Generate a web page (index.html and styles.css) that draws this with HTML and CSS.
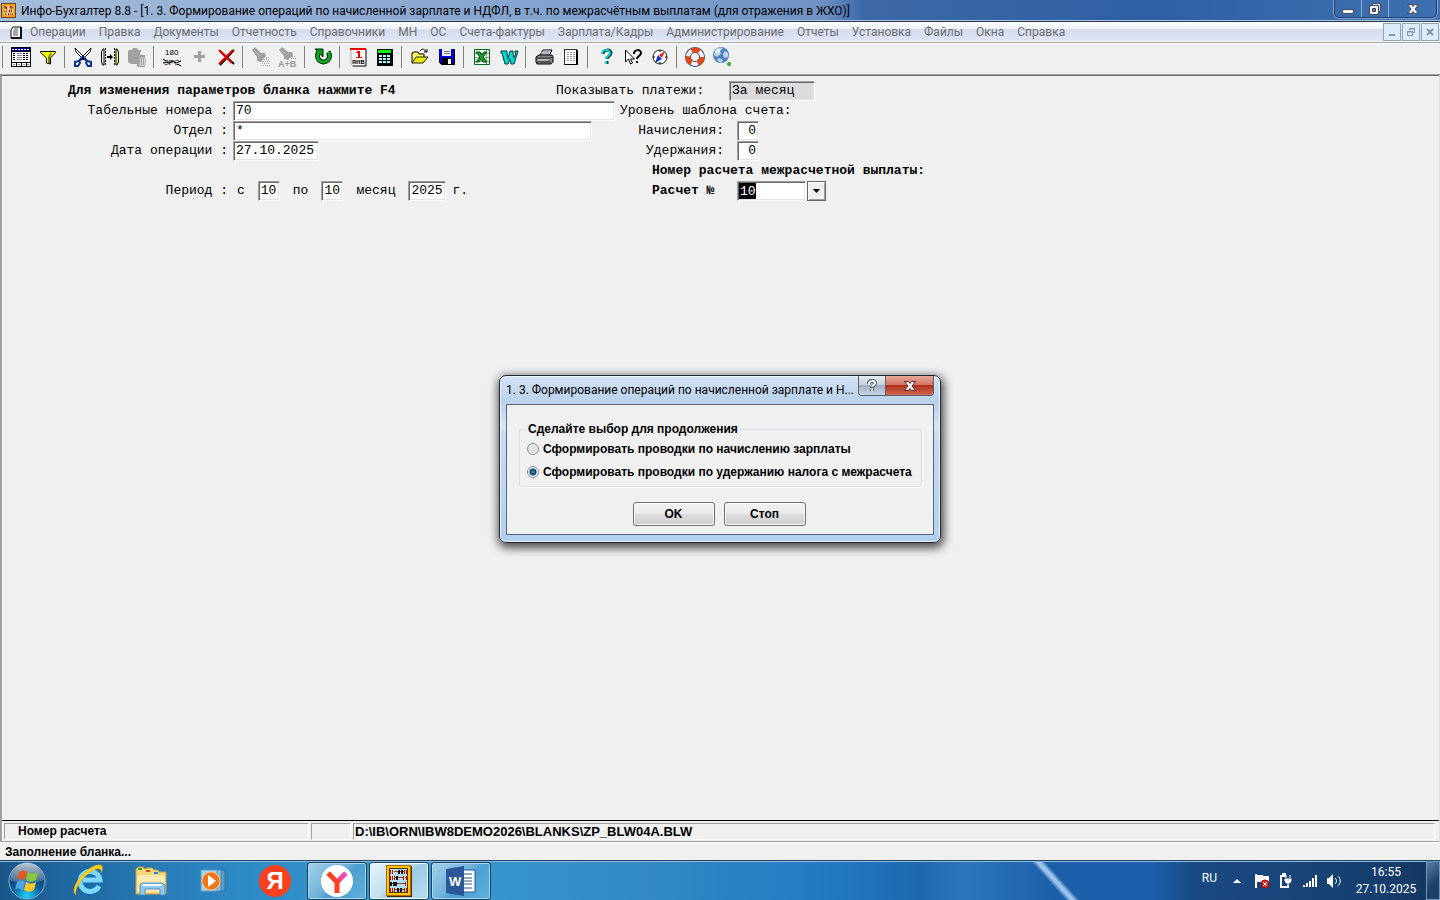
FILE: index.html
```html
<!DOCTYPE html>
<html lang="ru">
<head>
    <meta charset="UTF-8">
    <meta name="viewport" content="width=device-width, initial-scale=1.0">
    <title>Инфо-Бухгалтер 8.8</title>
    <link rel="stylesheet" href="styles.css">
</head>
<body>
    <!-- abacus logo of the taskbar button -->
    <svg class="sprite" aria-hidden="true">
        <symbol id="abacus" viewBox="0 0 26 32">
            <path d="M1 1h25v31H1z" fill="#4a2c00"/>
            <path d="M0 0h25v31H0z" fill="#b86400"/>
            <path d="M1 1h23v29H1z" fill="#ffc800"/>
            <path d="M3 3h19v25H3z" fill="#5a3000"/>
            <path d="M4 4h17v23H4z" fill="#b4dcf0"/>
            <path d="M4 6.500h17M4 12.500h17M4 18.500h17M4 24.500h17" stroke="#805030"/>
            <path d="M4.500 5v4M6.500 5v4M18.500 5v4M20.500 5v4M4.500 11v4M6.500 11v4M8.500 11v4M17.500 11v4M20.500 11v4M19.500 17v4M4.500 23v4M6.500 23v4M8.500 23v4M18.500 23v4M20.500 23v4" stroke="#b01010"/>
            <path d="M5.500 5v4M7.500 5v4M19.500 5v4M5.500 11v4M7.500 11v4M18.500 11v4M20.500 17v4M5.500 23v4M7.500 23v4M19.500 23v4" stroke="#ffe8b0"/>
            <path d="M13 5v4M16 5v4M11 11v4M5 17v4M8 17v4M10 17v4M12 23v4M15 23v4" stroke="#111" stroke-width="2"/>
        </symbol>
    </svg>

    <header class="titlebar">
        <svg class="app-icon" viewBox="0 0 16 16">
            <path d="M0 0h16v16H0z" fill="#6b3b00"/><path d="M1 1h14v14H1z" fill="#f0a020"/><path d="M3 3h10v10H3z" fill="#f8d890"/>
            <path d="M4 3v3M6 4v3M10 3v3M12 4v2M4 8v2M9 7v3M11 7v3M5 11v2M8 11v2M12 11v2" stroke="#5a1000"/>
            <path d="M5 3v3M11 3v3M6 8v2M10 11v2" stroke="#d02000"/>
        </svg>
        <h1 class="title">Инфо-Бухгалтер 8.8 - [1. 3. Формирование операций по начисленной зарплате и НДФЛ, в т.ч. по межрасчётным выплатам (для отражения в ЖХО)]</h1>
        <div class="window-buttons">
            <button type="button" aria-label="Свернуть"><svg width="14" height="14" viewBox="0 0 14 14"><path d="M1.500 7.500h11v4h-11z" fill="#f4f4f4" stroke="#454a5c"/></svg></button>
            <button type="button" aria-label="Развернуть"><svg width="14" height="14" viewBox="0 0 14 14"><path d="M4.500 1.500h8v8h-8z" fill="#ddd" stroke="#454a5c"/><path d="M1.500 3.500h9v9h-9z" fill="#f4f4f4" stroke="#454a5c"/><path d="M4.500 6.500h3v3h-3z" fill="#4878b8" stroke="#454a5c"/></svg></button>
            <button type="button" class="wide" aria-label="Закрыть"><svg width="14" height="14" viewBox="0 0 14 14"><path d="M1.500 2.500h4l1.500 2 1.500-2h4l-3.500 4.500 3.500 4.500h-4L7 9.500l-1.500 2h-4L5 7z" fill="#f4f4f4" stroke="#454a5c"/></svg></button>
        </div>
    </header>

    <nav class="menubar">
        <svg class="doc-icon" viewBox="0 0 12 13"><path d="M3 1h8v11H1V4z" fill="#fff" stroke="#111"/><path d="M11 1v11H1" fill="none" stroke="#111" stroke-width="2"/><path d="M3 5h5M3 7h5M3 9h5M4 3h4" stroke="#555"/></svg>
        <a href="#">Операции</a>
        <a href="#">Правка</a>
        <a href="#">Документы</a>
        <a href="#">Отчетность</a>
        <a href="#">Справочники</a>
        <a href="#">МН</a>
        <a href="#">ОС</a>
        <a href="#">Счета-фактуры</a>
        <a href="#">Зарплата/Кадры</a>
        <a href="#">Администрирование</a>
        <a href="#">Отчеты</a>
        <a href="#">Установка</a>
        <a href="#">Файлы</a>
        <a href="#">Окна</a>
        <a href="#">Справка</a>
        <div class="mdi-buttons">
            <button type="button" aria-label="Свернуть окно"><svg width="10" height="10" viewBox="0 0 10 10"><path d="M2 8h6" stroke="#8295a5" stroke-width="2"/></svg></button>
            <button type="button" aria-label="Восстановить окно"><svg width="10" height="10" viewBox="0 0 10 10"><path d="M3.500 3V1.500h5v4H7M3 2h6M1 5h6" fill="none" stroke="#8295a5"/><path d="M1.500 4.500h5v4h-5z" fill="none" stroke="#8295a5"/></svg></button>
            <button type="button" aria-label="Закрыть окно"><svg width="10" height="10" viewBox="0 0 10 10"><path d="M2 2l6 6M8 2L2 8" stroke="#8295a5" stroke-width="2"/></svg></button>
        </div>
    </nav>

    <div class="toolbar" role="toolbar">
        <span class="sep"></span>
        <button type="button" aria-label="Таблица"><svg viewBox="0 0 24 24" shape-rendering="crispEdges"><path d="M2 2h20v20H2z" fill="#000"/><path d="M3 3h18v3H3z" fill="#008"/><path d="M3 7h18v10H3zM3 18h4v3H3zM8 18h4v3H8zM13 18h4v3h-4zM18 18h3v3h-3z" fill="#fff"/><path d="M3 4.500h18" stroke="#fff" stroke-dasharray="2 1"/><path d="M4 8.500h3M4 10.500h3M4 12.500h3M4 14.500h3M14 8.500h6M14 10.500h6M14 12.500h6M14 14.500h6" stroke="#000" stroke-dasharray="2 1"/><path d="M8 8.500h5M8 10.500h5M8 12.500h5M8 14.500h5M4 19.500h2M9 19.500h2M14 19.500h2M18 19.500h2" stroke="#88a"/></svg></button>
        <button type="button" aria-label="Фильтр"><svg viewBox="0 0 24 24"><path d="M4.500 6.500h15v1L14.500 13v6l-4-1v-5L4.500 7.500z" fill="#ff0" stroke="#000"/><path d="M15 8l-2 4v6" fill="none" stroke="#808000" stroke-width="2"/></svg></button>
        <span class="sep"></span>
        <button type="button" aria-label="Вырезать"><svg viewBox="0 0 24 24"><path d="M4 3l1 4 8 8 2-1zM20 3l-1 4-8 8-2-1z" fill="#fff" stroke="#111"/><path d="M12 11.500l4 4.500M12 11.500L8 16" stroke="#002080" stroke-width="2"/><path d="M4 17l4-1 1 2-2 3H4zM20 17l-4-1-1 2 2 3h3z" fill="#fff" stroke="#103090" stroke-width="2"/></svg></button>
        <button type="button" aria-label="Перенос"><svg viewBox="0 0 24 24"><path d="M6 4H5L3.500 7v10L5 20h1V4z" fill="#fff" stroke="#000"/><path d="M7.500 3v18" stroke="#000" stroke-dasharray="2 1"/><path d="M18 4h1l1.500 3v10L19 20h-1z" fill="#ff6" stroke="#000"/><path d="M16.500 3v18" stroke="#000" stroke-dasharray="2 1"/><path d="M9 12h4" stroke="#000" stroke-width="2"/><path d="M12 9l3 3-3 3z"/></svg></button>
        <button type="button" aria-label="Вставить" disabled><svg viewBox="0 0 24 24"><path d="M4 5h3l1-2h4l1 2h3v5h4v12h-8v-3H6l-3-2V6z" fill="#a0a0a0"/><path d="M14 12h7v9h-7z" fill="#ccc"/><path d="M14 13h6M14 15h6M14 17h6M14 19h6" stroke="#888" stroke-dasharray="1 1"/><path d="M16 7v3" stroke="#fff"/></svg></button>
        <span class="sep"></span>
        <button type="button" aria-label="Замена"><svg viewBox="0 0 24 24"><text x="5" y="10" font-size="8">180</text><text x="4" y="20" font-size="8">ЗРС</text><path d="M3 18l4-1 2 1 4-2 3 2 5-2M3 14l3 2M21 21l-4-2" fill="none" stroke="#000"/></svg></button>
        <button type="button" aria-label="Добавить" disabled><svg viewBox="0 0 24 24"><path d="M12.500 6v11M7 11.500h11" stroke="#a0a0a0" stroke-width="3"/></svg></button>
        <button type="button" aria-label="Удалить"><svg viewBox="0 0 24 24"><path d="M6 6l14 13M20 5L6 20" stroke="#000" stroke-width="2"/><path d="M5 5l13 13M19 5L5 19" stroke="#e80000" stroke-width="2"/></svg></button>
        <span class="sep"></span>
        <button type="button" aria-label="Поиск" disabled><svg viewBox="0 0 24 24"><path d="M3 5l3-3 6 6h4l1 3-5 6-4-1V12z" fill="#a0a0a0"/><path d="M5 5l6 6" stroke="#eee" stroke-dasharray="1 1"/><path d="M15 12.500h5M13 14.500h8M12 16.500h9M13 18.500h8M14 20.500h7" stroke="#a0a0a0" stroke-dasharray="1 1"/></svg></button>
        <button type="button" aria-label="Поиск и замена" disabled><svg viewBox="0 0 24 24"><path d="M3 5l3-3 6 5h4l1 3-5 5-4-1v-3z" fill="#a0a0a0"/><path d="M5 5l6 5" stroke="#eee" stroke-dasharray="1 1"/><path d="M16 11.500h4M15 13.500h6" stroke="#a0a0a0" stroke-dasharray="1 1"/><text x="2" y="22" font-size="9" font-weight="bold" fill="#999">A+B</text></svg></button>
        <span class="sep"></span>
        <button type="button" aria-label="Обновить"><svg viewBox="0 0 24 24"><path d="M8 7a6 6 0 1 0 9 0" fill="none" stroke="#002800" stroke-width="5"/><path d="M4 4h8v8L9 9z" fill="#00a010" stroke="#002800"/><path d="M8 7a6 6 0 1 0 9 0" fill="none" stroke="#10a828" stroke-width="3"/></svg></button>
        <span class="sep"></span>
        <button type="button" aria-label="Календарь"><svg viewBox="0 0 24 24"><path d="M5 4h15v17H7l-2-2z" fill="#fff" stroke="#aaa"/><path d="M20 4v17H7" fill="none" stroke="#222"/><path d="M4 3h16v2H4z" fill="#f00000"/><path d="M10 7l2-1h2v6h2v1h-6v-1h2V8h-2z" fill="#f00000"/><text x="6" y="19" font-size="7" font-weight="bold">янв</text></svg></button>
        <button type="button" aria-label="Калькулятор"><svg viewBox="0 0 24 24" shape-rendering="crispEdges"><path d="M4 4h16v17H4z"/><path d="M5 5h13v3H5z" fill="#00f000"/><path d="M6 10h3v2H6zM10 10h3v2h-3zM14 10h3v2h-3zM6 13h3v2H6zM10 13h3v2h-3zM14 13h3v2h-3zM6 16h3v2H6zM10 16h3v2h-3zM14 16h3v2h-3z" fill="#a0ffff"/></svg></button>
        <span class="sep"></span>
        <button type="button" aria-label="Открыть"><svg viewBox="0 0 24 24"><path d="M4 18V8l2-1h4l1 2h5v3" fill="#ff6" stroke="#000"/><path d="M4 18l4-6h12l-5 6z" fill="#e8e800" stroke="#222"/><path d="M12 6c2-3 5-2 6 1M19 4v3h-3" fill="none" stroke="#000"/></svg></button>
        <button type="button" aria-label="Сохранить"><svg viewBox="0 0 24 24" shape-rendering="crispEdges"><path d="M5 4h15v16H6l-2-2z"/><path d="M4 4h15v14H5z" fill="#0000d0"/><path d="M7 4h9v7H7z" fill="#eee"/><path d="M9 6.500h6M9 8.500h6" stroke="#777"/><path d="M7 13h10v6H7z" fill="#000"/><path d="M13 14h3v5h-3z" fill="#fff"/></svg></button>
        <span class="sep"></span>
        <button type="button" aria-label="Excel"><svg viewBox="0 0 24 24"><path d="M4.500 4.500h15v15h-15z" fill="#f0f8f0" stroke="#006820"/><path d="M16.500 5v14M5 8.500h14M5 12.500h14M5 16.500h14" stroke="#8aa98a"/><path d="M6 7h4l2 3 2-3h3l-4 5 4 5h-4l-2-3-2 3H6l4-5z" fill="#20a030" stroke="#005010"/></svg></button>
        <button type="button" aria-label="Word"><svg viewBox="0 0 24 24"><path d="M4 6h6v2l1 6 2-8h3v2l1 5 2-5h-1V6h3l-4 13h-3l-1-5-2 5H8L5 8H4z" fill="#00d8d8" stroke="#003838"/></svg></button>
        <span class="sep"></span>
        <button type="button" aria-label="Печать"><svg viewBox="0 0 24 24"><path d="M8 10l3-5h9l-3 6z" fill="#fff" stroke="#000"/><path d="M11 7h7M10 9h7" stroke="#668"/><path d="M4 12l3-2h13l1 2v5l-2 2H5l-1-2z" fill="#888" stroke="#000"/><path d="M5 13h14l2-2M5 17h14" fill="none" stroke="#222"/><path d="M6 15h10" stroke="#ddd"/></svg></button>
        <button type="button" aria-label="Просмотр"><svg viewBox="0 0 24 24" shape-rendering="crispEdges"><path d="M5 5h14v15H5z"/><path d="M6 5h11v14H6z" fill="#fff"/><path d="M5.500 4v16M5 4.500h13" stroke="#333"/><path d="M8 7.500h8M8 9.500h8M8 11.500h8M8 13.500h8M8 15.500h8" stroke="#999" stroke-dasharray="2 1"/></svg></button>
        <span class="sep"></span>
        <button type="button" aria-label="Справка"><svg viewBox="0 0 24 24"><path d="M9 9c0-5 8-5 8-1 0 3-4 3-4 6M13 16v3" fill="none" stroke="#003030" stroke-width="3"/><path d="M8 9c0-5 8-5 8-1 0 3-4 3-4 6M12 16v3" fill="none" stroke="#00d8e0" stroke-width="2"/></svg></button>
        <button type="button" aria-label="Что это"><svg viewBox="0 0 24 24"><path d="M4.500 5v12l3-3 2 5 2-1-2-4h4z" fill="#fff" stroke="#000"/><path d="M13 9c0-5 7-5 7-1 0 3-4 3-4 6M16 16v2" fill="none" stroke="#000" stroke-width="2"/></svg></button>
        <button type="button" aria-label="Навигатор"><svg viewBox="0 0 24 24"><circle cx="12" cy="12" r="7" fill="#fff" stroke="#222"/><path d="M12 5v2M12 17v2M5 12h2M17 12h2" stroke="#000"/><path d="M17 6l-3 7-3-3z" fill="#f02020"/><path d="M7 18l3-8 4 4z" fill="#1030d0"/></svg></button>
        <span class="sep"></span>
        <button type="button" aria-label="Поддержка"><svg viewBox="0 0 24 24"><circle cx="12" cy="12" r="7" fill="none" stroke="#2a4a78" stroke-width="6"/><circle cx="12" cy="12" r="7" fill="none" stroke="#f4f4fa" stroke-width="4"/><circle cx="12" cy="12" r="7" fill="none" stroke="#e04818" stroke-width="5" stroke-dasharray="8 6.660"/></svg></button>
        <button type="button" aria-label="Интернет"><svg viewBox="0 0 24 24"><circle cx="11" cy="10" r="8" fill="#4f82c0"/><path d="M5 5c3-3 6-3 8-2l-3 3 1 3-4 3-3-2zM15 6l3 2v4l-4 1-1-4zM9 13l4 2-2 3-4-3z" fill="#bfd5ea"/><circle cx="8" cy="6" r="2" fill="#f0f8ff"/><circle cx="19" cy="19" r="2" fill="#30a838"/></svg></button>
    </div>

    <main class="workspace">
        <form class="blank">
            <div class="left">
                <div class="row"><strong class="hint">Для изменения параметров бланка нажмите F4</strong></div>
                <div class="row"><label class="name" for="numbers">Табельные номера :</label><input id="numbers" class="field numbers" type="text" value="70"></div>
                <div class="row"><label class="name" for="dept">Отдел :</label><input id="dept" class="field dept" type="text" value="*"></div>
                <div class="row"><label class="name" for="date">Дата операции :</label><input id="date" class="field date" type="text" value="27.10.2025"></div>
                <div class="row"></div>
                <div class="row period">
                    <span class="name">Период :</span>
                    <label for="from">с</label><input id="from" class="field short" type="text" value="10">
                    <label for="to">по</label><input id="to" class="field short" type="text" value="10">
                    <label for="year">месяц</label><input id="year" class="field year" type="text" value="2025">
                    <span class="unit">г.</span>
                </div>
            </div>
            <div class="right">
                <div class="row"><label class="payments-label" for="payments">Показывать платежи:</label><input id="payments" class="field date" type="text" value="За месяц" readonly></div>
                <div class="row level">Уровень шаблона счета:</div>
                <div class="row"><label class="count-label" for="accrual">Начисления:</label><input id="accrual" class="field short count" type="text" value="0"></div>
                <div class="row"><label class="count-label" for="deduct">Удержания:</label><input id="deduct" class="field short count" type="text" value="0"></div>
                <div class="row calc"><strong>Номер расчета межрасчетной выплаты:</strong></div>
                <div class="row calc">
                    <label class="calc-label" for="calc">Расчет №</label>
                    <select id="calc" class="field combo"><option>10</option></select>
                    <button type="button" class="drop" aria-label="Открыть список"><svg width="7" height="4" viewBox="0 0 7 4"><path d="M0 0h7L3.500 4z"/></svg></button>
                </div>
            </div>
        </form>
        <div class="panels">
            <div class="panel panel-name">Номер расчета</div>
            <div class="panel panel-empty"></div>
            <div class="panel panel-path">D:\IB\ORN\IBW8DEMO2026\BLANKS\ZP_BLW04A.BLW</div>
        </div>
    </main>

    <div class="statusbar">Заполнение бланка...</div>

    <footer class="taskbar">
        <button type="button" class="start" aria-label="Пуск">
            <svg width="38" height="38" viewBox="0 0 38 38">
                <defs>
                    <radialGradient id="orb" cx=".5" cy=".9" r=".8"><stop offset="0" stop-color="#20d0ff"/><stop offset=".5" stop-color="#0c5c98"/><stop offset="1" stop-color="#1a3d66"/></radialGradient>
                    <linearGradient id="gloss" x2="0" y2="1"><stop offset="0" stop-color="#fff" stop-opacity=".7"/><stop offset="1" stop-color="#fff" stop-opacity=".15"/></linearGradient>
                </defs>
                <circle cx="19" cy="19" r="18" fill="url(#orb)" stroke="#7cb4d8"/>
                <path d="M2 18a17 17 0 0 1 34 0c-10 4-24 4-34 0z" fill="url(#gloss)"/>
                <path d="M11 10c3-2 6-2 8 0l-2 8c-3-2-5-2-8 0z" fill="#e8581c"/>
                <path d="M20 10c3 2 6 2 10 0l-2 8c-4 2-7 2-10 0z" fill="#8cc63c"/>
                <path d="M9 20c3-2 5-2 8 0l-2 8c-3-2-6-2-8 0z" fill="#4ca4e4"/>
                <path d="M18 20c3 2 6 2 10 0l-2 8c-4 2-7 2-10 0z" fill="#fcc828"/>
            </svg>
        </button>
        <button type="button" class="task" aria-label="Internet Explorer">
            <svg width="34" height="34" viewBox="0 0 34 34"><path d="M27 22a10 10 0 1 1 1-6H11" fill="none" stroke="#1070b8" stroke-width="7"/><path d="M27 22a10 10 0 1 1 1-6H11" fill="none" stroke="#80d8fc" stroke-width="5"/><path d="M4 31c-7-5 5-22 16-28 9-5 13-1 9 6 1-4-2-6-9-2C10 13 2 25 4 31z" fill="#fcd020" stroke="#d89810" stroke-width=".5"/></svg>
        </button>
        <button type="button" class="task" aria-label="Проводник">
            <svg width="34" height="32" viewBox="0 0 34 32"><path d="M2 4l2-2h5l2 2 2-1h5l2 2h4l1 2h7v22H2z" fill="#f4d878" stroke="#c8a040"/><path d="M4 3h4v2H4z" fill="#28a040"/><path d="M12 5h4v2h-4z" fill="#e04020"/><path d="M20 7h4v2h-4z" fill="#2080e0"/><path d="M3 10h28v17H3z" fill="#fbeab0"/><path d="M6 20l2-2h20l3 2v10h-5v-6H11v6H6z" fill="#90c8ec" stroke="#4c94c8"/><path d="M8 20h20" stroke="#e8f8ff" stroke-width="2"/></svg>
        </button>
        <button type="button" class="task" aria-label="Проигрыватель">
            <svg width="28" height="28" viewBox="0 0 28 28"><path d="M10 3h16v21H10z" fill="#5c9cc8" stroke="#3070a0"/><path d="M6 3h16v21H6z" fill="#8cc0e0" stroke="#4888b8"/><path d="M2 3h16v21H2z" fill="#a8d4ec" stroke="#5c9cc8"/><circle cx="12" cy="14" r="9" fill="#f07818"/><circle cx="12" cy="14" r="9" fill="none" stroke="#fcc080"/><path d="M9 8l8 6-8 6z" fill="#fff"/></svg>
        </button>
        <button type="button" class="task yandex" aria-label="Яндекс">Я</button>
        <button type="button" class="task open" aria-label="Яндекс Браузер">
            <svg width="32" height="32" viewBox="0 0 32 32"><defs><linearGradient id="yb" x2="1" y2="0"><stop offset=".3" stop-color="#fc4020"/><stop offset="1" stop-color="#f050e0"/></linearGradient></defs><circle cx="16" cy="16" r="16" fill="#fff"/><path d="M7 8l9 9 9-9" fill="none" stroke="url(#yb)" stroke-width="5"/><path d="M16 15v13" stroke="#fc4020" stroke-width="5"/></svg>
        </button>
        <button type="button" class="task open active" aria-label="Инфо-Бухгалтер"><svg width="26" height="32"><use href="#abacus"/></svg></button>
        <button type="button" class="task open" aria-label="Word">
            <svg width="30" height="30" viewBox="0 0 30 30"><path d="M16 4h13v22H16z" fill="#fff" stroke="#2b579a"/><path d="M18 8h8M18 12h8M18 15h8M18 18h8M18 22h8" stroke="#2b579a"/><path d="M0 3l18-3v30L0 27z" fill="#2b579a"/><text x="3" y="20" font-size="13" font-weight="bold" fill="#fff">W</text></svg>
        </button>
        <div class="tray">
            <span class="lang">RU</span>
            <svg class="more" width="8" height="4" viewBox="0 0 8 4"><path d="M0 4h8L4 0z" fill="#fff"/></svg>
            <svg width="16" height="16" viewBox="0 0 16 16"><path d="M2 1v14" stroke="#fff" stroke-width="2"/><path d="M3 2h5l2 1h5v7H9L8 9H3z" fill="#fff"/><circle cx="11" cy="11" r="4" fill="#e02020" stroke="#901010"/><path d="M9 9l4 4M13 9l-4 4" stroke="#fff"/></svg>
            <svg width="16" height="16" viewBox="0 0 16 16"><path d="M8 3H3v11h7v-2" fill="none" stroke="#fff" stroke-width="2"/><path d="M4 1h4" stroke="#fff" stroke-width="2"/><path d="M6 5h8v3l-2 3H8L6 8z" fill="#fff" stroke="#1b3f6b"/><path d="M8 2v3M12 2v3M10 10v4" stroke="#fff"/></svg>
            <svg width="16" height="14" viewBox="0 0 16 14"><path d="M2 11v2M5 9v4M8 7v6M11 4v9M14 1v12" stroke="#fff" stroke-width="2"/></svg>
            <svg width="16" height="14" viewBox="0 0 16 14"><path d="M1 4h2l4-4v14l-4-4H1z" fill="#fff"/><path d="M9 4c2 2 2 4 0 6M12 2c3 3 3 7 0 10" fill="none" stroke="#fff"/></svg>
            <div class="clock"><div>16:55</div><div>27.10.2025</div></div>
        </div>
        <button type="button" class="show-desktop" aria-label="Свернуть все окна"></button>
    </footer>

    <section class="dialog" role="dialog" aria-labelledby="dialogTitle">
        <div class="dialog-head">
            <h2 class="dialog-title" id="dialogTitle">1. 3. Формирование операций по начисленной зарплате и Н...</h2>
            <div class="dialog-buttons">
                <button type="button" class="help" aria-label="Справка"><svg width="12" height="14" viewBox="0 0 12 14"><path d="M3 5c0-4 6-4 6-1 0 2-3 2-3 5M6 10v2" fill="none" stroke="#555b68" stroke-width="4"/><path d="M3 5c0-4 6-4 6-1 0 2-3 2-3 4M6 10v2" fill="none" stroke="#fff" stroke-width="2"/></svg></button>
                <button type="button" class="close" aria-label="Закрыть"><svg width="14" height="14" viewBox="0 0 14 14"><path d="M1.500 2.500h4l1.500 2 1.500-2h4l-3.500 4.500 3.500 4.500h-4L7 9.500l-1.500 2h-4L5 7z" fill="#f4f4f4" stroke="#5c3038"/></svg></button>
            </div>
        </div>
        <form class="dialog-body">
            <fieldset class="choices">
                <legend>Сделайте выбор для продолжения</legend>
                <label class="choice"><input type="radio" name="mode">Сформировать проводки по начислению зарплаты</label>
                <label class="choice"><input type="radio" name="mode" checked>Сформировать проводки по удержанию налога с межрасчета</label>
            </fieldset>
            <div class="actions">
                <button type="button">OK</button>
                <button type="button">Стоп</button>
            </div>
        </form>
    </section>
</body>
</html>
```

FILE: styles.css
```css
:root {
    --face: #f0f0f0;
    --shadow: #a0a0a0;
    --dark: #696969;
    --ui-font: Roboto, "Open Sans", sans-serif;
    --bold-font: "Liberation Sans", Arial, sans-serif;
    --mono-font: "Liberation Mono", "Courier New", monospace;
}

* {
    box-sizing: border-box;
}

body {
    margin: 0;
    height: 100vh;
    display: flex;
    flex-direction: column;
    overflow: hidden;
    background: var(--face);
    font-family: var(--ui-font);
    font-size: 12px;
    color: #000;
}

button {
    flex: none;
    font: inherit;
    padding: 0;
    border: none;
    background: none;
    display: flex;
    align-items: center;
    justify-content: center;
}

.sprite {
    position: absolute;
    width: 0;
    height: 0;
}

/* title bar */
.titlebar {
    height: 22px;
    flex: none;
    display: flex;
    align-items: center;
    padding: 0 3px 0 1px;
    border-bottom: 1px solid #26354e;
    background: linear-gradient(90deg, #a4bcdb 0, #8eabd3 25%, #7d9fcd 45%, #7093c4 57%, #3b69a8 60%, #2f60a4 80%, #3f70b1 100%);
    box-shadow: inset 0 -1px 0 #a9c3e4;
}

.app-icon {
    width: 15px;
    height: 17px;
}

.title {
    margin: 0 auto 0 5px;
    font-size: 12px;
    font-weight: normal;
    line-height: 20px;
    white-space: nowrap;
}

.window-buttons {
    display: flex;
    align-self: flex-start;
    height: 18px;
    border: 1px solid #26406c;
    border-top: none;
    border-radius: 0 0 5px 5px;
    box-shadow: 0 0 0 1px #7fa3d0;
}

.window-buttons button {
    width: 27px;
    border-right: 1px solid #8fafd8;
}

.window-buttons .wide {
    width: 47px;
    border: none;
}

/* menu */
.menubar {
    height: 21px;
    flex: none;
    display: flex;
    align-items: center;
    gap: 13px;
    padding: 0 1px 0 10px;
    background: linear-gradient(#fff 0, #eef1f8 33%, #d5dcee 34%, #dfe5f6 100%);
    border-bottom: 1px solid var(--shadow);
    box-shadow: inset 0 -1px 0 #fff;
    color: #6d6d6d;
}

.menubar a {
    color: inherit;
    text-decoration: none;
    line-height: 18px;
}

.doc-icon {
    width: 12px;
    height: 13px;
    margin-right: -5px;
}

.mdi-buttons {
    display: flex;
    gap: 1px;
    margin-left: auto;
}

.mdi-buttons button {
    width: 18px;
    height: 18px;
    border: 1px solid #8fa3b5;
    background: #dcebf9;
}

/* toolbar */
.toolbar {
    height: 32px;
    flex: none;
    display: flex;
    align-items: center;
    padding-bottom: 4px;
    border-top: 1px solid #fff;
    border-bottom: 1px solid var(--shadow);
}

.toolbar button {
    width: 27px;
    height: 26px;
}

.toolbar svg {
    width: 24px;
    height: 24px;
    font-family: var(--bold-font);
}

.sep {
    width: 8px;
    height: 22px;
    padding-left: 3px;
    display: flex;
}

.sep:first-child {
    width: 7px;
    padding-left: 2px;
}

.sep::before {
    content: "";
    width: 1px;
    background: #808080;
}

/* blank */
.workspace {
    flex: 1;
    display: flex;
    flex-direction: column;
    border-left: 2px solid var(--shadow);
    border-top: 1px solid var(--dark);
    border-right: 1px solid #e3e3e3;
    border-bottom: 1px solid var(--shadow);
    box-shadow: inset 1px 0 0 #fff;
}

.blank {
    flex: 1;
    display: flex;
    padding-top: 5px;
    font-family: var(--mono-font);
    font-size: 13px;
    line-height: 20px;
}

.left {
    flex: none;
    width: 554px;
}

.row {
    display: flex;
    align-items: center;
    height: 20px;
    white-space: nowrap;
}

.hint {
    padding-left: 66px;
}

.name {
    flex: none;
    width: 231px;
    padding-right: 5px;
    text-align: right;
}

.field {
    flex: none;
    height: 20px;
    padding: 0 0 0 2px;
    border: 1px solid var(--shadow);
    border-right-color: #fff;
    border-bottom-color: #fff;
    border-radius: 0;
    outline: none;
    background: #fff;
    box-shadow: inset 1px 1px 0 var(--dark), inset -1px -1px 0 #e3e3e3;
    font: inherit;
    color: #000;
}

.field[readonly] {
    background: #dcdcdc;
}

.numbers {
    width: 382px;
}

.dept {
    width: 359px;
}

.date {
    width: 86px;
}

.short {
    width: 22px;
}

.year {
    width: 38px;
}

.period {
    gap: 13px;
}

.period .name {
    margin-right: -9px;
}

.unit {
    margin-left: -7px;
}

.payments-label {
    width: 173px;
}

.level {
    padding-left: 64px;
}

.count-label {
    width: 181px;
    padding-right: 13px;
    text-align: right;
}

.count {
    text-align: right;
    padding-right: 2px;
}

.calc {
    padding-left: 96px;
}

.calc-label {
    width: 85px;
    font-weight: bold;
}

.combo {
    appearance: none;
    width: 69px;
    margin-right: 1px;
    color: #fff;
    background: linear-gradient(#000, #000) 1px 1px / 17px 16px no-repeat #fff;
}

.drop {
    width: 19px;
    height: 20px;
    border: 1px solid var(--dark);
    background: var(--face);
    box-shadow: inset 1px 1px 0 #fff, inset -1px -1px 0 var(--shadow);
}

/* status */
.panels {
    display: flex;
    gap: 2px;
    padding: 2px 4px 1px 2px;
    border-top: 1px solid #000;
}

.panel {
    height: 17px;
    border: 1px solid var(--shadow);
    border-right-color: #fff;
    border-bottom-color: #fff;
    font: bold 12px/15px var(--bold-font);
    white-space: nowrap;
}

.panel-name {
    width: 305px;
    padding-left: 13px;
}

.panel-empty {
    width: 40px;
}

.panel-path {
    flex: 1;
    padding-left: 1px;
    font-size: 13px;
}

.statusbar {
    height: 18px;
    flex: none;
    padding-left: 5px;
    border-top: 1px solid #fff;
    font: bold 12px/18px var(--bold-font);
}

/* taskbar */
.taskbar {
    height: 40px;
    flex: none;
    display: flex;
    align-items: center;
    gap: 2px;
    border-top: 1px solid #24405f;
    box-shadow: inset 0 1px 0 #8fbbe0;
    background:
        linear-gradient(48deg, transparent 44%, #9cc4ee 49%, #9cc4ee 52%, transparent 57%) 1020px 0 / 70px 40px no-repeat,
        linear-gradient(90deg, #1b5788 0, #1f659e 4%, #2b86c2 15%, #3a9ad0 28%, #3289c6 45%, #2279c0 58%, #1d68ae 64%, #2b76bc 67%, #1c60aa 73%, #1c5fac 80%, #194a83 83%, #163f70 95%, #14365f 100%);
}

.start {
    width: 57px;
    height: 39px;
    padding-right: 3px;
}

.task {
    width: 60px;
    height: 38px;
}

.yandex {
    width: 32px;
    height: 32px;
    margin: 0 14px;
    border-radius: 50%;
    background: #fc3f1d;
    color: #fff;
    font: bold 24px/32px var(--bold-font);
}

.open {
    border: 1px solid #16415f;
    border-radius: 3px;
    background: linear-gradient(135deg, #a4d0ea 0, #6eb2da 45%, #4e9fd0 55%, #5cb0dc 100%);
    box-shadow: inset 0 0 0 1px #a8d8f0;
}

.active {
    background: linear-gradient(135deg, #eaf4fa 0, #c0dff0 45%, #9ccbe6 55%, #b8deef 100%);
    box-shadow: inset 0 0 0 1px #f0faff;
}

.taskbar svg {
    font-family: var(--bold-font);
}

.tray {
    margin-left: auto;
    display: flex;
    align-items: center;
    gap: 8px;
    color: #fff;
}

.lang {
    margin: 0 8px 6px 0;
}

.more {
    margin-right: 5px;
}

.clock {
    width: 76px;
    margin-left: -2px;
    text-align: center;
    line-height: 17px;
}

.show-desktop {
    width: 14px;
    height: 39px;
    border: 1px solid #7096bc;
    background: linear-gradient(135deg, #5880a8, #1d3f68 60%);
}

/* dialog */
.dialog {
    position: absolute;
    top: 375px;
    left: 50%;
    transform: translateX(-50%);
    width: 442px;
    padding: 0 6px 7px;
    border: 1px solid #20262e;
    border-radius: 7px;
    background: linear-gradient(#d3e3f5 0, #b9d1eb 16%, #d6e6f7 32%, #c8dcf1 34%, #b2cfee 100%);
    box-shadow: inset 0 0 0 1px #eaf4fd, 1px 3px 10px 2px #000000b0;
}

.dialog-head {
    display: flex;
    justify-content: space-between;
    height: 28px;
}

.dialog-title {
    margin: 0;
    font-size: 12px;
    font-weight: normal;
    line-height: 28px;
    white-space: nowrap;
}

.dialog-buttons {
    display: flex;
    flex: none;
    height: 20px;
    border: 1px solid #54606e;
    border-top: none;
    border-radius: 0 0 4px 4px;
    overflow: hidden;
}

.help {
    width: 27px;
    border-right: 1px solid #54606e;
    background: linear-gradient(#e8edf4 0, #c8d0dc 45%, #a4b0c2 50%, #c4d2e2 100%);
}

.close {
    width: 47px;
    background: linear-gradient(#e8a898 0, #d47464 45%, #b03020 50%, #d06848 100%);
}

.dialog-body {
    padding: 16px 11px 8px 12px;
    border: 1px solid #56687e;
    background: var(--face);
    font: bold 12px/16px var(--bold-font);
}

.choices {
    margin: 0;
    padding: 0 6px 3px 7px;
    border: 1px solid #d5dfe5;
    border-radius: 3px;
    box-shadow: 1px 1px 0 #fff;
}

.choices legend {
    padding: 0 2px;
    margin-left: -1px;
}

.choice {
    display: flex;
    align-items: center;
    gap: 4px;
    height: 23px;
    white-space: nowrap;
}

.choice input {
    appearance: none;
    flex: none;
    width: 12px;
    height: 12px;
    margin: 0;
    border: 1px solid #8e8f8f;
    border-radius: 50%;
    background: radial-gradient(circle, #d4d8dc, #f4f4f4);
}

.choice input:checked {
    background: radial-gradient(circle at 50% 50%, #2c9cc8 0, #123c58 3px, #e8f0f4 4px);
}

.actions {
    display: flex;
    justify-content: center;
    gap: 9px;
    margin-top: 15px;
    padding-right: 3px;
}

.actions button {
    width: 82px;
    height: 24px;
    border: 1px solid #707070;
    border-radius: 3px;
    background: linear-gradient(#f2f2f2 0, #ebebeb 50%, #dddddd 51%, #cfcfcf 100%);
    box-shadow: inset 0 0 0 1px #fafafa;
}
```
